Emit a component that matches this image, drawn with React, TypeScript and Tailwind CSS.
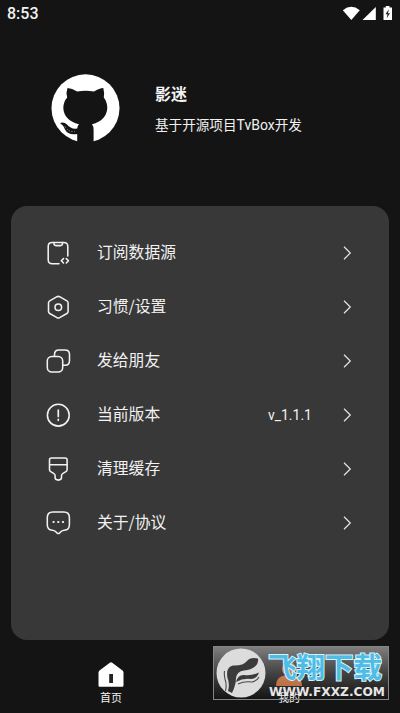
import type { ReactNode } from "react";

type MenuItem = {
  label: string;
  value?: string;
  icon: ReactNode;
};

const menuItems: MenuItem[] = [
  {
    label: "订阅数据源",
    icon: (
      <>
        <path d="M13 22.800H6.200Q2.200 22.800 2.200 18.800V5.400Q2.200 1.400 6.200 1.400H17.800Q21.800 1.400 21.800 5.400V15" />
        <path d="M8 1.600v1q0 2 2 2h4.500q2 0 2-2v-1" />
        <path d="M17.500 17.600l-2.200 2.200 2.200 2.200M20.300 17.600l2.200 2.200-2.200 2.200" />
      </>
    ),
  },
  {
    label: "习惯/设置",
    icon: (
      <>
        <path d="M11 1.700q1.300-.7 2.600 0l7.300 4.200q1.200.7 1.200 2v8.600q0 1.300-1.200 2l-7.300 4.200q-1.300.7-2.600 0l-7.300-4.200q-1.200-.7-1.200-2V7.900q0-1.300 1.200-2z" />
        <circle cx="12.300" cy="12.200" r="3.300" />
      </>
    ),
  },
  {
    label: "发给朋友",
    icon: (
      <>
        <rect x="1.300" y="7.500" width="15.400" height="15.400" rx="4.500" />
        <path d="M8.500 7V5.500Q8.500 1 13 1h6q4.500 0 4.500 4.500v6q0 4.800-4.500 4.800h-2" />
      </>
    ),
  },
  {
    label: "当前版本",
    value: "v_1.1.1",
    icon: (
      <>
        <circle cx="12.300" cy="12.200" r="10.900" />
        <path d="M12.300 7.200v6.300M12.300 16.300v1" strokeWidth="1.700" />
      </>
    ),
  },
  {
    label: "清理缓存",
    icon: (
      <>
        <path d="M5.500 1h13.600q2 0 2 2v9.500q0 1.500-1.200 2.200l-3.200 1.900q-1.200.7-1.200 2v2q0 2.500-3.200 2.500t-3.200-2.500v-2q0-1.300-1.200-2l-3.200-1.900q-1.200-.7-1.200-2.200V3q0-2 1.800-2z" />
        <path d="M3.800 7.800h17.300" />
      </>
    ),
  },
  {
    label: "关于/协议",
    icon: (
      <>
        <path d="M7 1h10.800q5.600 0 5.600 5.500v7.200q0 5.200-5 5.500-2 .1-3.300 1.300l-1.700 1.600q-1.100.9-2.200 0l-1.700-1.600Q8.200 19.300 6.300 19.200q-5-.3-5-5.500V6.500Q1.300 1 7 1z" />
        <path d="M7.400 11h.4M12.100 11h.4M16.800 11h.4" strokeWidth="1.900" />
      </>
    ),
  },
];

function StatusBar() {
  return (
    <header className="flex h-7 items-center justify-between px-[7px]">
      <span className="font-[Roboto,sans-serif] text-[16px] leading-7 font-medium">
        8:53
      </span>
      <svg width="51" height="16" viewBox="0 0 51 16" fill="white">
        <path d="M.8 4.200Q9.300-2.500 17.800 4.200L9.300 14z" />
        <path d="M33.800 1v13H20.500z" />
        <path d="M43.800 1.500V0h3.700v1.500h2.500V14h-8.500V1.500z" />
        <path d="M46.800 3.200l-3.300 5h2l-.8 4 3.300-5h-2z" fill="#222" />
      </svg>
    </header>
  );
}

function Avatar() {
  return (
    <svg width="69" height="69" viewBox="0 0 69 69">
      <circle cx="34.500" cy="34.300" r="34" fill="white" />
      <path
        fill="#141414"
        d="M16.500 14Q21 14.200 26.200 17.500Q34.500 16 43 17.500Q48.500 14.200 52.300 14Q53.600 18.500 52.800 23.500Q56.300 28 56.300 34Q55.500 46.500 41 50.200Q42.600 52 42.600 56V69H26.200V60Q17 61.500 14 55.500Q12 50.800 9 49Q13 47.500 16 50.500Q20 55.500 26.200 54.500Q26.500 51.500 28 50.200Q13 46.500 12.300 34Q12.500 27.500 16.200 23.500Q14.700 18.500 16.500 14z"
      />
      <path
        d="M14 52.500q3 6 10 5"
        stroke="#9a9a9a"
        strokeWidth="1"
        strokeDasharray="1.200 1.600"
        fill="none"
      />
    </svg>
  );
}

function MenuRow({ label, value, icon }: MenuItem) {
  return (
    <li className="flex h-[54px] items-center pr-[37px] pl-[35px]">
      <svg
        className="mr-[26px]"
        width="25"
        height="25"
        viewBox="0 0 25 25"
        fill="none"
        stroke="#f2f2f2"
        strokeWidth="1.550"
        strokeLinecap="round"
        strokeLinejoin="round"
      >
        {icon}
      </svg>
      <span className="pb-[2px] text-[15.800px] leading-6">{label}</span>
      {value && (
        <span className="mr-[30px] ml-auto font-[Roboto,sans-serif] text-[14px]">
          {value}
        </span>
      )}
      <svg
        className={value ? "" : "ml-auto"}
        width="10"
        height="14"
        viewBox="0 0 10 14"
        fill="none"
        stroke="#e4e4e4"
        strokeWidth="1.200"
      >
        <path d="M2 .8L8.300 7L2 13.200" />
      </svg>
    </li>
  );
}

function Watermark() {
  return (
    <div className="absolute top-[646px] left-[213px] flex h-[54px] w-[176px] border border-[#858585] bg-linear-to-b from-white/45 via-white/20 to-white/0">
      <svg className="mt-px ml-[2px] shrink-0" width="50" height="50" viewBox="0 0 50 50">
        <circle cx="25" cy="25" r="24.500" fill="#dcdcdc" />
        <path
          fill="#3b3b3b"
          d="M12 43Q14 36 11.500 30Q9.500 19 17 17.500Q27 18 31 13Q34 9 42 10.500Q43 15 39 18.500Q35 22 28 22.500Q21 23 20 30Q20 37 16 45z"
        />
        <path
          fill="#3b3b3b"
          d="M20 34Q22 26.500 28 27Q36 28 43 24.500Q41 30.500 35 31Q27 30 20 34z"
        />
        <path
          d="M9.500 43Q11 37 9 31Q8 27 8.500 23M22 36Q28 33 36 34Q41 33 43 29"
          fill="none"
          stroke="#4a4a4a"
          strokeWidth="1.100"
        />
      </svg>
      <div className="flex flex-col pl-[2px]">
        <span className="h-[38px] text-[28.500px] leading-[38px] font-bold whitespace-nowrap text-[#4fbce6] [-webkit-text-stroke:2px_#d4f3fd] [paint-order:stroke_fill]">
          飞翔下载
        </span>
        <svg width="120" height="14" viewBox="0 0 120 14" className="overflow-visible">
          <text
            x="1"
            y="11"
            textLength="116"
            lengthAdjust="spacingAndGlyphs"
            fill="#e6e6e6"
            className="font-['DejaVu_Sans',sans-serif] text-[13px] font-bold"
          >
            WWW.FXXZ.COM
          </text>
        </svg>
      </div>
    </div>
  );
}

export default function App() {
  return (
    <div className="relative flex h-[713px] w-[400px] flex-col overflow-hidden bg-[#141414] font-['Noto_Sans_CJK_SC',sans-serif] text-[#f2f2f2]">
      <StatusBar />

      {/* Profile */}
      <section className="flex h-[178px] pt-[46px] pl-[51px]">
        <Avatar />
        <div className="ml-[35px] pt-[7px]">
          <h1 className="text-[16px] leading-6 font-bold">影迷</h1>
          <p className="mt-[9px] text-[13.600px] leading-5">
            基于开源项目
            <span className="font-[Roboto,sans-serif] text-[14px]">TvBox</span>
            开发
          </p>
        </div>
      </section>

      {/* Menu */}
      <main className="mx-[11px] h-[434px] rounded-[16px] bg-[#383838] pt-[20px]">
        <ul>
          {menuItems.map((item) => (
            <MenuRow key={item.label} {...item} />
          ))}
        </ul>
      </main>

      {/* Tabs */}
      <nav className="grid flex-1 grid-cols-2 px-[22px] pt-[22px] text-[11px] leading-4">
        <div className="flex flex-col items-center">
          <svg width="26" height="25" viewBox="0 0 26 25">
            <path
              d="M11.800.7q1.200-1 2.400 0l10.300 7.800q1 .8 1 2v13q0 1.200-1.200 1.200H1.700Q.5 24.700.5 23.500v-13q0-1.200 1-2z"
              fill="white"
            />
            <path d="M11.200 12h3.800v9h-3.800z" fill="#242424" />
          </svg>
          <span className="mt-[2px]">首页</span>
        </div>
        <div className="flex flex-col items-center">
          <svg width="26" height="25" viewBox="0 0 26 25" fill="#b5602f">
            <circle cx="13" cy="7" r="7" />
            <path d="M0 24q0-11 13-11t13 11z" />
          </svg>
          <span className="mt-[2px]">我的</span>
        </div>
      </nav>

      <Watermark />
    </div>
  );
}
